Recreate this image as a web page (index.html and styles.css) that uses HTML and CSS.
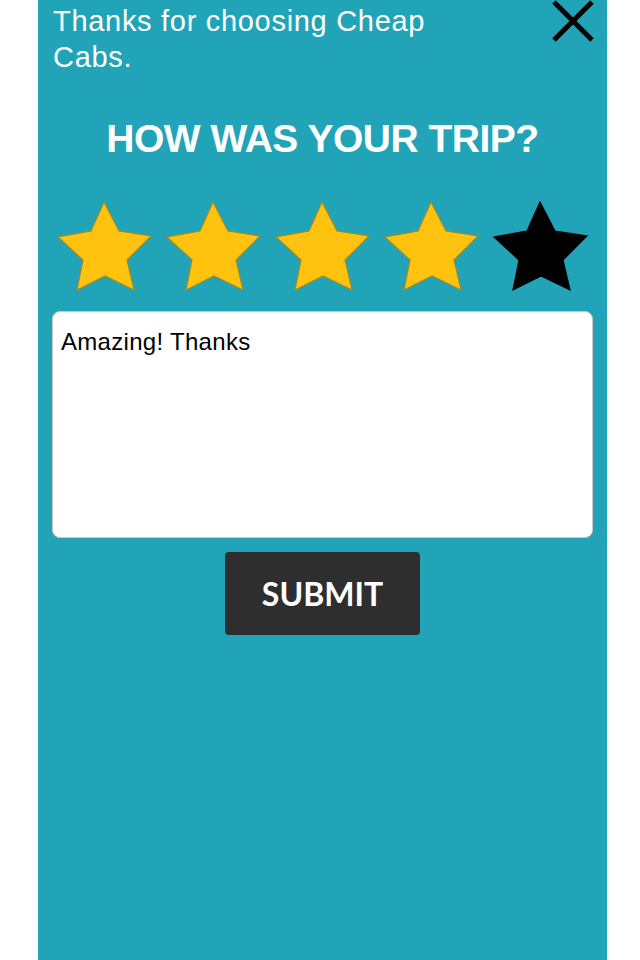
FILE: index.html
```html
<!DOCTYPE html>
<html lang="en">
<head>
<meta charset="utf-8">
<title>Rate your trip</title>
<link rel="stylesheet" href="styles.css">
</head>
<body>
<main class="panel">
  <header class="top">
    <p class="thanks">Thanks for choosing Cheap Cabs.</p>
    <button class="close" type="button" aria-label="Close">
      <svg viewBox="0 0 44 44" width="44" height="44">
        <path d="M3 2 L41 40 M41 2 L3 40" stroke="#000" stroke-width="5" fill="none"/>
      </svg>
    </button>
  </header>

  <h1 class="question">HOW WAS YOUR TRIP?</h1>

  <div class="stars">
    <svg class="star on" viewBox="-1 -1 96 92" width="96" height="92"><polygon points="46,0 33,29 0,35 25,58 19,88 47,74 76,88 69,58 93,34 61,29"/></svg>
    <svg class="star on" viewBox="-1 -1 96 92" width="96" height="92"><polygon points="46,0 33,29 0,35 25,58 19,88 47,74 76,88 69,58 93,34 61,29"/></svg>
    <svg class="star on" viewBox="-1 -1 96 92" width="96" height="92"><polygon points="46,0 33,29 0,35 25,58 19,88 47,74 76,88 69,58 93,34 61,29"/></svg>
    <svg class="star on" viewBox="-1 -1 96 92" width="96" height="92"><polygon points="46,0 33,29 0,35 25,58 19,88 47,74 76,88 69,58 93,34 61,29"/></svg>
    <svg class="star off" viewBox="-1 -1 96 92" width="96" height="92"><polygon points="46,0 33,29 0,35 25,58 19,88 47,74 76,88 69,58 93,34 61,29"/></svg>
  </div>

  <textarea class="comment" rows="6">Amazing! Thanks</textarea>

  <div class="actions">
    <button class="submit" type="button">SUBMIT</button>
  </div>
</main>
</body>
</html>
```

FILE: styles.css
```css
html, body {
  margin: 0;
  padding: 0;
  background: #ffffff;
}

body {
  font-family: "Liberation Sans", Arial, sans-serif;
}

.panel {
  box-sizing: border-box;
  margin-left: 38px;
  width: 569px;
  min-height: 960px;
  background: #22a4b8;
  padding: 0;
  display: flex;
  flex-direction: column;
}

.top {
  display: flex;
  justify-content: space-between;
  align-items: flex-start;
}

.thanks {
  margin: 3px 0 0 15px;
  width: 420px;
  color: #ffffff;
  font-size: 29px;
  line-height: 36px;
  letter-spacing: 0.7px;
}

.close {
  margin: 0 12px 0 0;
  padding: 0;
  border: 0;
  background: none;
  width: 44px;
  height: 44px;
  display: block;
}

.close svg {
  display: block;
}

.question {
  margin: 40px 0 0 0;
  text-align: center;
  color: #ffffff;
  font-size: 39px;
  line-height: 47px;
  font-weight: bold;
  letter-spacing: -0.5px;
}

.stars {
  display: flex;
  gap: 13px;
  margin: 39px 0 0 19px;
}

.star {
  display: block;
}

.star polygon {
  stroke-width: 1.2;
  stroke-linejoin: miter;
}

.star.on polygon {
  fill: #ffc30f;
  stroke: #9a8c2a;
}

.star.off polygon {
  fill: #000000;
  stroke: #000000;
}

.comment {
  box-sizing: border-box;
  display: block;
  margin: 18px 0 0 14px;
  width: 541px;
  height: 227px;
  padding: 15px 8px 8px 8px;
  border: 1px solid #c9c9c9;
  border-radius: 8px;
  background: #ffffff;
  color: #000000;
  font-family: "Liberation Sans", Arial, sans-serif;
  font-size: 24px;
  line-height: 29px;
  letter-spacing: 0.3px;
  resize: none;
  outline: none;
}

.actions {
  display: flex;
  justify-content: center;
  margin-top: 14px;
}

.submit {
  width: 195px;
  height: 83px;
  border: 0;
  border-radius: 4px;
  background: #2e2e2e;
  color: #ffffff;
  font-family: Lato, "Open Sans", sans-serif;
  font-weight: bold;
  font-size: 32px;
  padding: 0;
}
```
